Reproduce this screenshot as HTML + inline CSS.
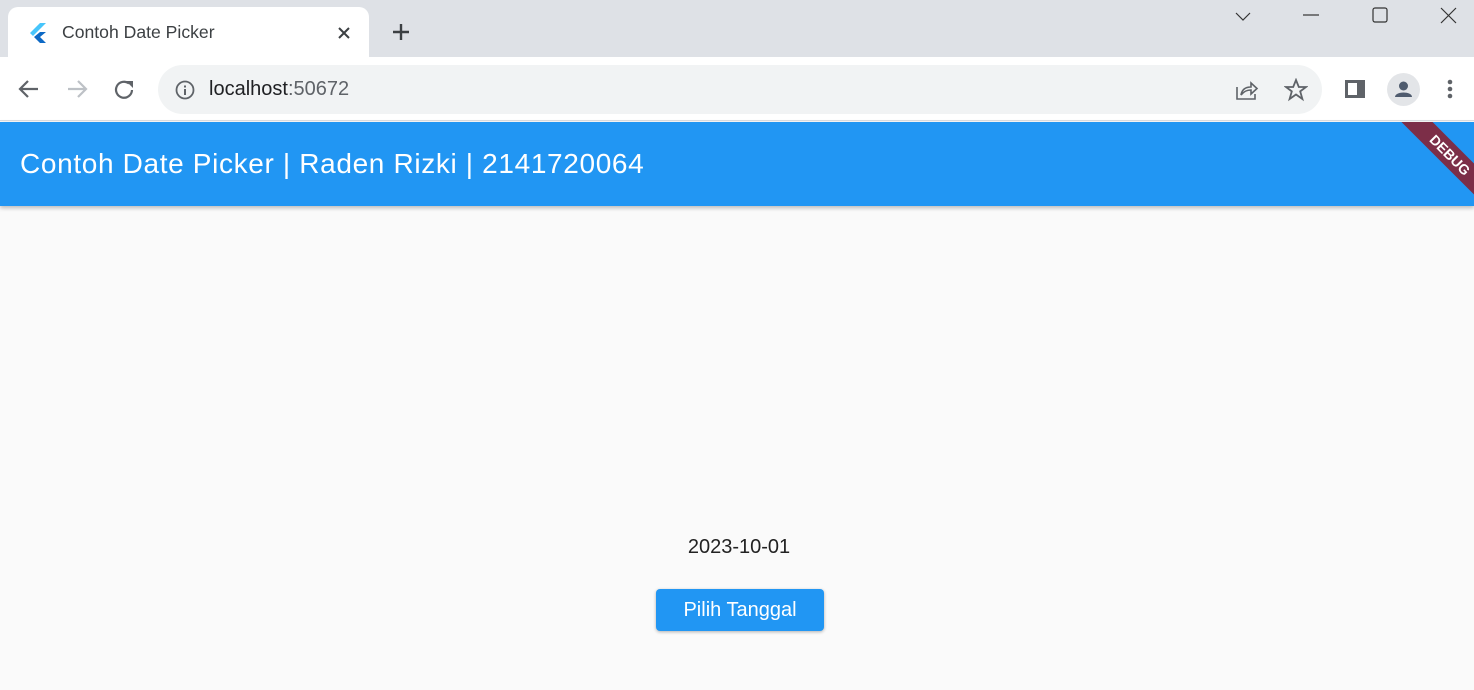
<!DOCTYPE html>
<html><head><style>
*{margin:0;padding:0;box-sizing:border-box}
body{width:1474px;height:690px;overflow:hidden;background:#fafafa;font-family:"Liberation Sans",sans-serif;position:relative}
.top{position:absolute;left:0;top:0;width:1474px;height:57px;background:#dee1e6}
.tab{position:absolute;left:8px;top:7px;width:361px;height:51px;background:#fff;border-radius:10px 10px 0 0}
.tab .t{position:absolute;left:54px;top:15px;font-size:17.6px;color:#3c4043}
.tool{position:absolute;left:0;top:57px;width:1474px;height:64px;background:#fff;border-bottom:1px solid #dadce0}
.omni{position:absolute;left:158px;top:8px;width:1164px;height:49px;background:#f1f3f4;border-radius:25px}
.omni .u{position:absolute;left:51px;top:13px;font-size:20px;color:#202124}
.bar{position:absolute;left:0;top:122px;width:1474px;height:84px;background:#2196f3;box-shadow:0 2px 4px rgba(0,0,0,.25);overflow:hidden}
.bar .h{position:absolute;left:20px;top:26px;font-size:28px;letter-spacing:0.65px;color:#fff}
.dbg{position:absolute;left:1385px;top:22px;width:130px;height:22px;background:#7c2e48;transform:rotate(45deg);color:#fff;font-size:14px;font-weight:bold;text-align:center;line-height:22px}
.date{position:absolute;left:0;width:1478px;text-align:center;top:536px;font-size:20px;color:#222}
.btn{position:absolute;left:656px;top:589px;width:168px;height:42px;background:#2196f3;border-radius:4px;color:#fff;font-size:20px;text-align:center;line-height:42px;box-shadow:0 1px 3px rgba(0,0,0,.3)}
svg{position:absolute}
</style></head><body>
<div class="top">
<div class="tab"><svg style="left:22px;top:16px" width="16" height="20" viewBox="0 0 16 20"><path d="M10 0L0 10l3 3L16 0z" fill="#47c5fb"/><path d="M10 9L4 14l6 6h6l-6-6 6-5z" fill="#0d69c5"/></svg>
<div class="t">Contoh Date Picker</div>
<svg style="left:329px;top:19px" width="14" height="14"><path d="M2 2L12 12M12 2L2 12" stroke="#3c4043" stroke-width="2"/></svg></div>
<svg style="left:391px;top:22px" width="20" height="20"><path d="M10 2V18M2 10H18" stroke="#3c4043" stroke-width="2.4"/></svg>
<svg style="left:1234px;top:10px" width="20" height="14"><path d="M2 3L9 10L16 3" stroke="#333" fill="none" stroke-width="1.2"/></svg>
<svg style="left:1303px;top:14px" width="18" height="4"><path d="M0 1H16" stroke="#333" stroke-width="1.2"/></svg>
<svg style="left:1372px;top:7px" width="18" height="18"><rect x="1" y="1" width="14" height="14" rx="2" stroke="#333" fill="none" stroke-width="1.2"/></svg>
<svg style="left:1440px;top:7px" width="18" height="18"><path d="M1 1L16 16M16 1L1 16" stroke="#333" stroke-width="1.2"/></svg>
</div>
<div class="tool">
<svg style="left:18px;top:22px" width="22" height="20"><path d="M20 10H3M10 2L2 10L10 18" stroke="#5f6368" stroke-width="2.2" fill="none"/></svg>
<svg style="left:66px;top:22px" width="22" height="20"><path d="M2 10H19M12 2L20 10L12 18" stroke="#bdc1c6" stroke-width="2.2" fill="none"/></svg>
<svg style="left:113px;top:21px" width="24" height="24"><path d="M19 12A8 8 0 1 1 16 5.5" stroke="#5f6368" stroke-width="2.2" fill="none"/><path d="M13 3H20V10z" fill="#5f6368"/></svg>
<div class="omni">
<svg style="left:17px;top:15px" width="20" height="20"><circle cx="10" cy="10" r="8.5" stroke="#5f6368" stroke-width="1.8" fill="none"/><path d="M10 9V15M10 5.5V7.5" stroke="#5f6368" stroke-width="2"/></svg>
<div class="u">localhost<span style="color:#5f6368">:50672</span></div>
<svg style="left:1077px;top:14px" width="24" height="22"><path d="M2 8V20H20V15" stroke="#5f6368" stroke-width="1.6" fill="none"/><path d="M6 16C7 10 11 8 16 8V4L22 9.5L16 15V11C12 11 9 12 6 16z" stroke="#5f6368" stroke-width="1.6" fill="none"/></svg>
<svg style="left:1126px;top:13px" width="24" height="24"><path d="M12 2L14.8 9H22L16.2 13.4L18.4 21L12 16.5L5.6 21L7.8 13.4L2 9H9.2z" stroke="#5f6368" stroke-width="1.8" fill="none"/></svg>
</div>
<svg style="left:1344px;top:22px" width="22" height="20"><rect x="1" y="1" width="20" height="18" fill="#5f6368"/><rect x="4" y="4" width="9" height="12" fill="#fff"/></svg>
<svg style="left:1387px;top:16px" width="33" height="33"><circle cx="16.5" cy="16.5" r="16.5" fill="#e3e5e8"/><circle cx="16.5" cy="13" r="4.5" fill="#4f5b6e"/><path d="M8 24C8 18 25 18 25 24z" fill="#4f5b6e"/></svg>
<svg style="left:1446px;top:22px" width="8" height="22"><circle cx="4" cy="3" r="2.3" fill="#5f6368"/><circle cx="4" cy="10" r="2.3" fill="#5f6368"/><circle cx="4" cy="17" r="2.3" fill="#5f6368"/></svg>
</div>
<div class="bar"><div class="h">Contoh Date Picker | Raden Rizki | 2141720064</div><div class="dbg">DEBUG</div></div>
<div class="date">2023-10-01</div>
<div class="btn">Pilih Tanggal</div>
</body></html>
